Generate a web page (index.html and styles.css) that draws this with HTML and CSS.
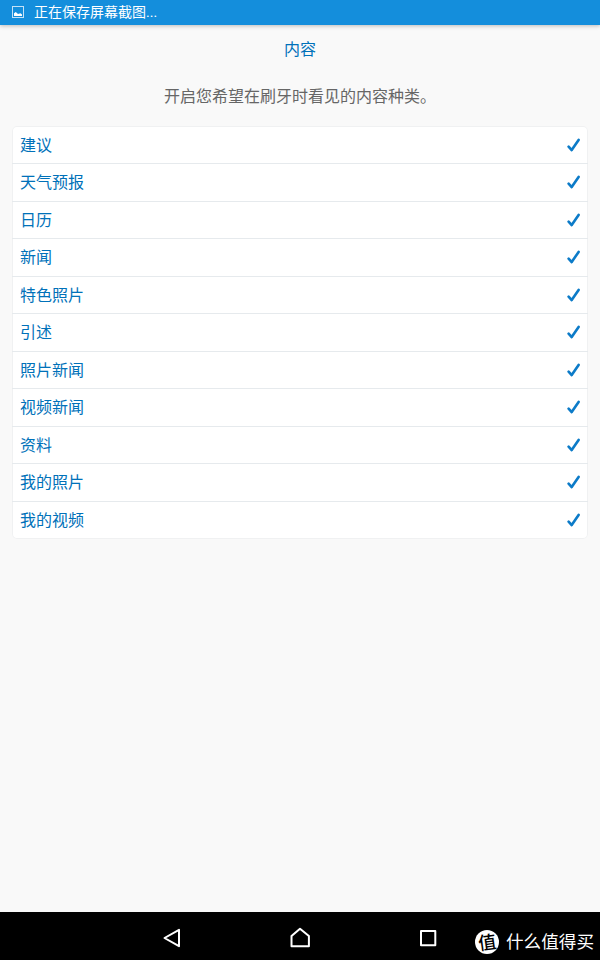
FILE: index.html
```html
<!DOCTYPE html>
<html lang="zh-CN">
<head>
    <meta charset="UTF-8">
    <meta name="viewport" content="width=device-width, initial-scale=1.0">
    <title>内容</title>
    <link rel="stylesheet" href="styles.css">
</head>
<body>
    <svg class="sprite" width="0" height="0">
        <symbol id="check" viewBox="0 0 14 14">
            <path d="M2.6 8.6 5.7 12.1 12.6 1.9" />
        </symbol>
    </svg>

    <header class="status-bar">
        <svg class="status-icon" viewBox="0 0 12 12">
            <rect x="0.5" y="0.5" width="11" height="11" fill="none" stroke="#c3e1f6" />
            <path d="M2 10V7.2L3.8 6 6 8 8.5 7.2 10 8.6V10Z" fill="#fff" />
        </svg>
        <span class="status-text">正在保存屏幕截图<span class="dots">...</span></span>
    </header>

    <main class="content">
        <h1>内容</h1>
        <p class="hint">开启您希望在刷牙时看见的内容种类。</p>

        <ul class="list">
            <li><span>建议</span><svg class="check"><use href="#check" /></svg></li>
            <li><span>天气预报</span><svg class="check"><use href="#check" /></svg></li>
            <li><span>日历</span><svg class="check"><use href="#check" /></svg></li>
            <li><span>新闻</span><svg class="check"><use href="#check" /></svg></li>
            <li><span>特色照片</span><svg class="check"><use href="#check" /></svg></li>
            <li><span>引述</span><svg class="check"><use href="#check" /></svg></li>
            <li><span>照片新闻</span><svg class="check"><use href="#check" /></svg></li>
            <li><span>视频新闻</span><svg class="check"><use href="#check" /></svg></li>
            <li><span>资料</span><svg class="check"><use href="#check" /></svg></li>
            <li><span>我的照片</span><svg class="check"><use href="#check" /></svg></li>
            <li><span>我的视频</span><svg class="check"><use href="#check" /></svg></li>
        </ul>
    </main>

    <nav class="nav-bar">
        <svg class="nav-icon" viewBox="0 0 24 24"><path d="M19 3.8V20.2L4.5 12Z" /></svg>
        <svg class="nav-icon" viewBox="0 0 24 24"><path d="M3.5 20.2V10.1L12 2.7 20.9 10.1V20.2Z" /></svg>
        <svg class="nav-icon" viewBox="0 0 24 24"><path d="M5 5H19.3V19.3H5Z" /></svg>
        <div class="watermark">
            <span class="badge"><span>值</span></span>
            <span class="brand">什么值得买</span>
        </div>
    </nav>
</body>
</html>
```
FILE: styles.css
```css
* {
    box-sizing: border-box;
}

body {
    margin: 0;
    height: 960px;
    display: flex;
    flex-direction: column;
    overflow: hidden;
    background: #f9f9f9;
    font-family: "Noto Sans CJK SC", sans-serif;
    font-size: 16px;
    line-height: 24px;
}

.sprite {
    position: absolute;
}

.status-bar {
    display: flex;
    align-items: center;
    gap: 10px;
    height: 25px;
    padding: 0 0 1px 12px;
    background: #148edc;
    box-shadow: 0 1px 4px rgba(0, 0, 0, 0.25);
    color: #fff;
    font-size: 14px;
}

.status-text {
    padding-bottom: 2px;
}

.dots {
    font-family: Roboto, sans-serif;
}

.status-icon {
    width: 12px;
    height: 12px;
}

.content {
    flex: 1;
    padding: 11px 12px;
}

h1 {
    margin: 0;
    color: #0071b9;
    font-size: 16px;
    font-weight: 400;
    text-align: center;
}

.hint {
    margin: 23px 0 18.9px;
    color: #666;
    text-align: center;
}

.list {
    margin: 0;
    padding: 0 0 0.3px;
    list-style: none;
    background: #fff;
    border-radius: 5px;
    box-shadow: inset 0 0 0 1px #f0f1f2;
}

.list li {
    display: flex;
    align-items: center;
    justify-content: space-between;
    height: 37.5px;
    padding: 0 8px;
    color: #0071b9;
}

.list li + li {
    border-top: 1px solid #e6eaed;
}

/* keeps the half-pixel rows on the same rounding as the others */
.list li:nth-child(even) {
    padding-bottom: 1px;
}

.list span {
    padding-bottom: 1.4px;
}

.check {
    width: 14px;
    height: 14px;
    fill: none;
    stroke: #0c7bc8;
    stroke-width: 2.6;
    stroke-linecap: round;
    stroke-linejoin: round;
}

.nav-bar {
    position: relative;
    display: flex;
    align-items: center;
    gap: 104px;
    height: 48px;
    padding: 4px 0 0 160px;
    background: #000;
}

.nav-icon {
    width: 24px;
    height: 24px;
    fill: none;
    stroke: #fff;
    stroke-width: 2;
    stroke-linejoin: round;
}

/* overlaid on the right end of the bar */
.watermark {
    position: absolute;
    right: 6px;
    top: 17px;
    display: flex;
    align-items: center;
    gap: 7px;
    color: #fff;
    font-size: 17.6px;
}

.brand {
    padding-bottom: 1px;
}

.badge {
    display: flex;
    align-items: center;
    justify-content: center;
    width: 24px;
    height: 24px;
    border-radius: 50%;
    background: #fff;
    color: #000;
    font-size: 18px;
    font-weight: 500;
}

.badge span {
    transform: translateY(-1px) rotate(-8deg);
}
```
